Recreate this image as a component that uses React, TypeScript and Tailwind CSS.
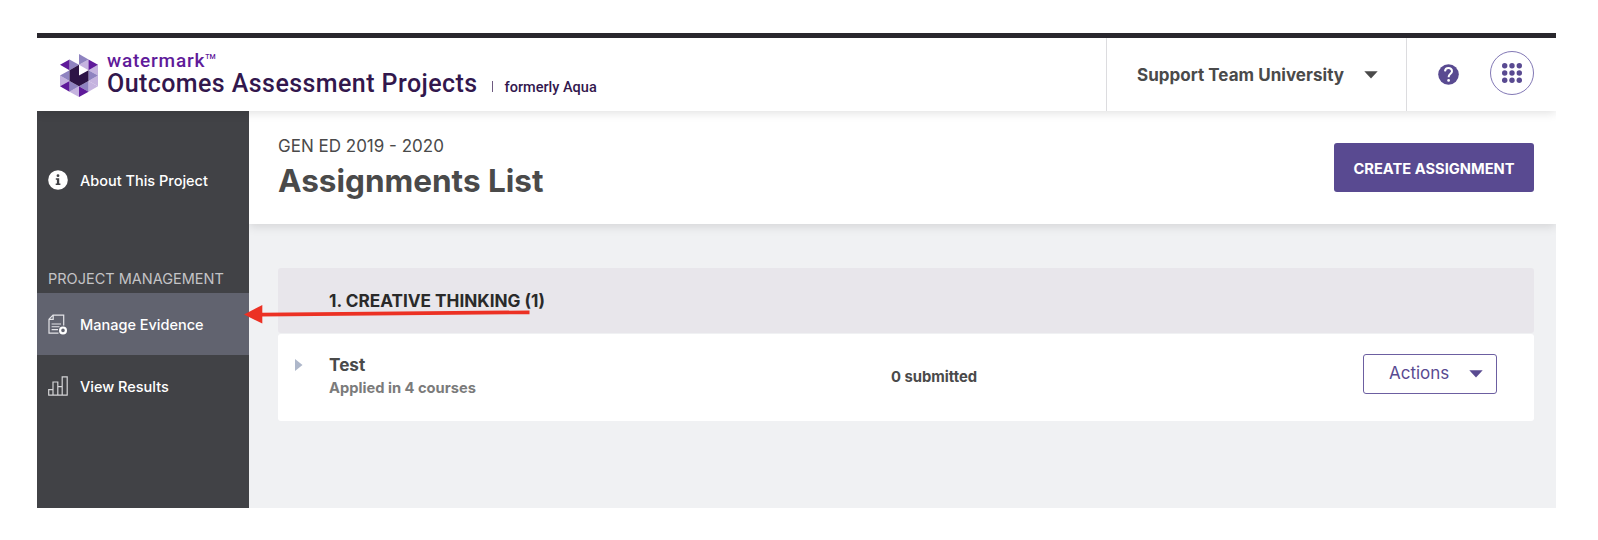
import React from "react";

function Logo() {
  return (
    <svg width="38" height="43" viewBox="0 0 4 4" preserveAspectRatio="none" className="mt-px shrink-0">
      <g fill="#c5b3df">
        <path d="M3 .5V1.5L2 1Z" />
        <path d="M4 1V2L3 1.5Z" />
        <path d="M4 2V3L3 2.5Z" />
        <path d="M3 2.5V3.5L4 3Z" />
        <path d="M0 2V3L1 2.5Z" />
        <path d="M2 3V4L1 3.5Z" />
      </g>
      <g fill="#8f83c0">
        <path d="M2 0V1L3 .5Z" />
        <path d="M1 .5V1.5L2 1Z" />
        <path d="M1 1.5V2.5L0 2Z" />
        <path d="M3 1.5V2.5L4 2Z" />
        <path d="M1 2.5V3.5L2 3Z" />
        <path d="M3 2.5V3.5L2 3Z" />
      </g>
      <g fill="#5f1a9a">
        <path d="M1 .5V1.5L0 1Z" />
        <path d="M3 .5V1.5L4 1Z" />
        <path d="M1 2.5V3.5L0 3Z" />
        <path d="M2 3V4L3 3.5Z" />
      </g>
      <path fill="#2d1446" d="M1 1.5L2 1V2L3 1.5V2.5L2 3L1 2.5Z" />
    </svg>
  );
}

function Caret({ className }: { className: string }) {
  return (
    <svg width="14" height="8" viewBox="0 0 14 8" className={className}>
      <path d="M.3 .3H13.7L7 7.6Z" fill="currentColor" />
    </svg>
  );
}

function InfoIcon() {
  return (
    <svg width="20" height="20" viewBox="0 0 20 20">
      <circle cx="10" cy="10" r="9.8" fill="#fff" />
      <circle cx="10" cy="5.7" r="1.4" fill="#414246" />
      <path d="M7.8 8.2H11.2V13.4H12.4V15H7.7V13.4H8.9V9.8H7.8Z" fill="#414246" />
    </svg>
  );
}

function EvidenceIcon() {
  return (
    <svg width="20" height="21" viewBox="0 0 20 21" fill="none" stroke="#e4e4e8" strokeWidth="1.2">
      <path d="M10.5 19.2H1V5.2L5 1.2H15.7V11.6M5.2 1.4V5.4H1.3" />
      <path d="M3.6 10H13M3.6 12.8H11.5M3.6 15.6H10" strokeWidth="1.1" />
      <circle cx="15" cy="16.4" r="2.9" stroke="#fff" strokeWidth="2.2" />
    </svg>
  );
}

function ResultsIcon() {
  return (
    <svg width="20" height="20" viewBox="0 0 20 20" fill="none" stroke="#d4d4d6" strokeWidth="1.2">
      <path d="M.7 19.2V13.6H5M5 19.2V6H9.8V19.2M9.8 10.7H14.2M14.2 19.2V.8H19.2V19.2M.2 19.2H19.7" />
    </svg>
  );
}

function HelpIcon() {
  return (
    <svg width="21" height="21" viewBox="0 0 21 21">
      <circle cx="10.5" cy="10.5" r="10.3" fill="#594a91" />
      <path d="M7 7.4C7.2 3 14 3.1 14 7.2C14 9.9 10.6 9.7 10.6 13.2" fill="none" stroke="#fff" strokeWidth="2" />
      <circle cx="10.6" cy="16.4" r="1.35" fill="#fff" />
    </svg>
  );
}

function GridIcon() {
  return (
    <svg width="20" height="20" viewBox="0 0 20 20" fill="#594a91">
      {[2.7, 10, 17.3].map((y) => [2.7, 10, 17.3].map((x) => <circle key={`${x}-${y}`} cx={x} cy={y} r="2.7" />))}
    </svg>
  );
}

function Header() {
  return (
    <header className="relative z-10 flex h-[78px] shrink-0 border-t-[5px] border-[#29272d] bg-white shadow-[0_1px_10px_rgba(0,0,0,0.14)]">
      <div className="flex grow pl-[23px] pt-[15px]">
        <Logo />
        <div className="ml-[9px] font-['Roboto'] text-[#32174d]">
          <div className="-mt-[2px] flex h-[19px] items-start text-[19px] font-medium leading-[19px] tracking-[0.8px] text-[#5f1a9a]">
            watermark
            <span className="text-[7px] leading-[12px] tracking-normal">TM</span>
          </div>
          <div className="flex items-baseline whitespace-nowrap leading-[28px]">
            <span className="text-[25px] font-medium tracking-[0.43px]">Outcomes Assessment Projects</span>
            <span className="ml-[14px] h-[11px] w-px bg-[#6e5a80]" />
            <span className="ml-[12px] text-[14.5px] font-medium">formerly Aqua</span>
          </div>
        </div>
      </div>
      <div className="flex w-[300px] items-center border-l border-[#dcdcdf] pl-[30px] pt-[2px] text-[#4a4a4a]">
        <span className="whitespace-nowrap text-[17px] font-bold tracking-[0.03px]">Support Team University</span>
        <Caret className="ml-[20px] -mt-[2px]" />
      </div>
      <div className="flex w-[150px] items-center border-l border-[#dcdcdf] pl-[31px]">
        <HelpIcon />
        <div className="-mt-[3px] ml-[31px] flex size-[44px] items-center justify-center rounded-full border border-[#8278b5]">
          <GridIcon />
        </div>
      </div>
    </header>
  );
}

function NavItem({ icon, label, active }: { icon: React.ReactNode; label: string; active?: boolean }) {
  return (
    <a className={`flex h-[62px] items-center gap-[12px] pl-[11px] ${active ? "bg-[#61636f]" : ""}`}>
      {icon}
      <span className="whitespace-nowrap pt-px text-[14.5px] font-medium text-white">{label}</span>
    </a>
  );
}

function Sidebar() {
  return (
    <nav className="flex w-[212px] shrink-0 flex-col bg-[#414246] pt-[38px]">
      <NavItem icon={<InfoIcon />} label="About This Project" />
      <h2 className="mb-[4px] mt-[58px] whitespace-nowrap pl-[11px] text-[14.5px] leading-[20px] text-[#c4c4c6]">
        PROJECT MANAGEMENT
      </h2>
      <NavItem icon={<EvidenceIcon />} label="Manage Evidence" active />
      <NavItem icon={<ResultsIcon />} label="View Results" />
    </nav>
  );
}

function Main() {
  return (
    <main className="grow overflow-hidden bg-[#f0f1f3]">
      <div className="flex h-[113px] justify-between bg-white pl-[29px] pr-[22px] shadow-[0_2px_10px_rgba(0,0,0,0.13)]">
        <div className="pt-[25px] text-[#4a4a4a]">
          <p className="text-[17px] leading-[20px]">GEN ED 2019 - 2020</p>
          <h1 className="mt-[6px] text-[31.5px] font-bold leading-[38px]">Assignments List</h1>
        </div>
        <button className="mt-[32px] h-[49px] w-[200px] whitespace-nowrap rounded-[3px] bg-[#594a91] pt-[3px] text-[14.7px] font-bold text-white">
          CREATE ASSIGNMENT
        </button>
      </div>
      <section className="ml-[29px] mr-[22px] mt-[44px]">
        <h3 className="flex h-[65px] items-center rounded-[3px] bg-[#e8e6eb] pl-[51px] text-[17.2px] font-bold text-[#2a2a2a]">
          1. CREATIVE THINKING (1)
        </h3>
        <div className="mt-px flex h-[87px] rounded-[3px] bg-white text-[#4a4a4a]">
          <svg width="8" height="12" viewBox="0 0 8 12" className="ml-[17px] mt-[25px]">
            <path d="M0 0L7.5 6L0 12Z" fill="#aeb7ca" />
          </svg>
          <div className="ml-[26px] w-[562px] pt-[20px]">
            <p className="text-[17.2px] font-bold leading-[22px]">Test</p>
            <p className="text-[14.7px] font-bold leading-[24px] text-[#7b7b7b]">Applied in 4 courses</p>
          </div>
          <p className="grow pt-[33px] text-[14.8px] font-bold leading-[20px]">0 submitted</p>
          <button className="mr-[37px] mt-[20px] flex h-[40px] w-[134px] items-center rounded-[3px] border border-[#6c5fa1] pl-[25px] text-[#594a91]">
            <span className="-mt-px text-[17px]">Actions</span>
            <Caret className="ml-[20px] -mt-px" />
          </button>
        </div>
      </section>
    </main>
  );
}

export default function App() {
  return (
    <div className="relative h-[540px] w-[1598px] overflow-hidden bg-white pl-[37px] pt-[33px] font-['Inter',sans-serif]">
      <div className="flex h-[475px] w-[1519px] flex-col overflow-hidden">
        <Header />
        <div className="flex grow">
          <Sidebar />
          <Main />
        </div>
      </div>
      <svg width="286" height="20" viewBox="0 0 286 20" className="absolute left-[244px] top-[304px] z-20">
        <path d="M16 10.7L285.5 8.3" stroke="#ec3124" strokeWidth="3.7" />
        <path d="M0 10.5L18.3 1V19.5Z" fill="#ec3124" />
      </svg>
    </div>
  );
}
